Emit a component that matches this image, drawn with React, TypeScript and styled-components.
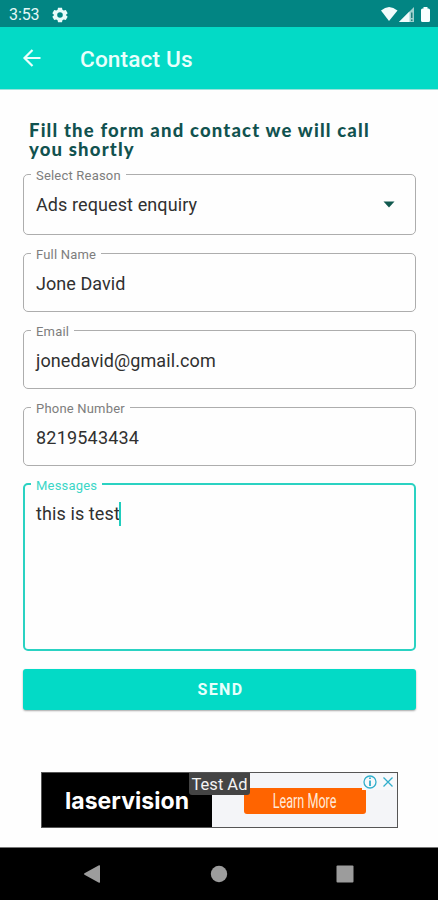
import React from "react";
import styled, { createGlobalStyle } from "styled-components";

const GlobalStyle = createGlobalStyle`
  * { box-sizing: border-box; }
  body { margin: 0; background: #fff; }
`;

const Screen = styled.div`
  width: 438px;
  height: 900px;
  display: flex;
  flex-direction: column;
  overflow: hidden;
  background: #fefefe;
  font-family: Roboto, sans-serif;
  color: #303030;
`;

const StatusBar = styled.div`
  height: 27px;
  flex: none;
  display: flex;
  align-items: center;
  padding: 2px 7px 0 9px;
  background: #028583;
  color: #e4f7f6;
  font-size: 16px;
  letter-spacing: -0.1px;
`;

const StatusIcons = styled.svg`
  margin-left: auto;
`;

const GearIcon = styled.svg`
  margin-left: 13px;
`;

const AppBar = styled.header`
  height: 63px;
  flex: none;
  display: flex;
  align-items: center;
  padding: 2px 22px 0;
  background: #03dac6;
  border-bottom: 1px solid #9be3dc;
  color: #e9fffc;
`;

const Title = styled.h1`
  margin: 1px 0 0 38px;
  font-size: 22.6px;
  font-weight: 500;
  line-height: 28px;
  letter-spacing: 0.15px;
`;

const Content = styled.main`
  flex: 1;
  display: flex;
  flex-direction: column;
  padding: 31px 22px 0 23px;
`;

const Heading = styled.h2`
  margin: 0 0 8px 6px;
  font-family: Lato, sans-serif;
  font-size: 18.5px;
  font-weight: 900;
  line-height: 19px;
  letter-spacing: 1.17px;
  color: #11524f;
`;

const Field = styled.fieldset<{ $height: number; $gap?: number; $active?: boolean }>`
  height: ${(p) => p.$height}px;
  min-width: 0;
  margin: 0 0 ${(p) => p.$gap ?? 11}px;
  padding: 0 20px 0 ${(p) => (p.$active ? 6 : 7)}px;
  border: ${(p) => (p.$active ? "2px solid #2ad2c2" : "1.5px solid #adadad")};
  border-radius: 5px;
  display: flex;
  justify-content: space-between;
`;

const Label = styled.legend<{ $active?: boolean }>`
  height: 14px;
  padding: 0 5px;
  font-size: 13px;
  line-height: ${(p) => (p.$active ? 18 : 17)}px;
  letter-spacing: 0.2px;
  color: ${(p) => (p.$active ? "#3bd6c7" : "#7d7d7d")};
`;

const Value = styled.div<{ $top: number; $spacing?: number }>`
  height: 24px;
  margin-top: ${(p) => p.$top}px;
  padding-left: 5px;
  display: flex;
  align-items: center;
  font-size: 18px;
  line-height: 24px;
  letter-spacing: ${(p) => p.$spacing ?? 0.1}px;
  white-space: pre;
`;

const Caret = styled.span`
  width: 2px;
  height: 24px;
  margin-left: -1px;
  background: #20cdbd;
`;

const DropIcon = styled.svg`
  margin-top: 20px;
`;

const SendButton = styled.button`
  height: 41px;
  flex: none;
  margin-top: 7px;
  padding: 0 0 0 2px;
  border: 0;
  border-radius: 3px;
  background: #03dac6;
  box-shadow: 0 1px 2px rgba(0, 0, 0, 0.35);
  color: #e8fffc;
  font: 700 16px/42px Roboto, sans-serif;
  letter-spacing: 1.4px;
`;

const Ad = styled.aside`
  position: relative;
  width: 357px;
  height: 56px;
  flex: none;
  display: flex;
  margin: 62px 0 0 18px;
  border: 1px solid #555;
  background: #f4f5f8;
`;

const Brand = styled.div`
  width: 170px;
  padding: 1px 0 0 23px;
  background: #000;
  color: #fff;
  font: 700 23px/54px Inter, sans-serif;
  letter-spacing: 0.05px;
`;

const AdBody = styled.div`
  flex: 1;
  padding: 15px 0 0 32px;
`;

const LearnMore = styled.div`
  width: 122px;
  height: 26px;
  display: flex;
  justify-content: center;
  border-radius: 3px;
  background: #ff6400;
  color: #ffe9d8;
  font-size: 20px;
  line-height: 27px;

  span {
    flex: none;
    transform: scaleX(0.63);
  }
`;

const TestBadge = styled.div`
  position: absolute;
  left: 147px;
  top: 0;
  width: 61px;
  height: 22px;
  border-radius: 0 0 3px 3px;
  background: #444;
  color: #f4f4f4;
  font-size: 16.5px;
  line-height: 23px;
  text-align: center;
  white-space: nowrap;
`;

const AdChoices = styled.svg`
  position: absolute;
  right: 0;
  top: 1px;
`;

const NavBar = styled.nav`
  height: 53px;
  flex: none;
  display: flex;
  align-items: center;
  justify-content: space-between;
  padding: 0 84px 1px 83px;
  border-top: 1px solid #777;
  background: #000;
`;

const fields = [
  { label: "Full Name", value: "Jone David", spacing: 0.05, gap: 11 },
  { label: "Email", value: "jonedavid@gmail.com", spacing: 0.1, gap: 11 },
  { label: "Phone Number", value: "8219543434", spacing: 0.2, gap: 11 },
];

export default function App() {
  return (
    <Screen>
      <GlobalStyle />
      <StatusBar>
        <span>3:53</span>
        <GearIcon width="16" height="16" viewBox="0 0 24 24" fill="#e9fbfa">
          <path fillRule="evenodd" d="M9 1h6l.6 3.2 2 1.2 3.1-1 2.8 4.9-2.4 2.2v1l2.4 2.2-2.8 4.9-3.1-1-2 1.2L15 23H9l-.6-3.2-2-1.2-3.1 1-2.8-4.9 2.4-2.2v-1L.5 9.3l2.8-4.9 3.1 1 2-1.2zM12 7.8a4.2 4.2 0 1 0 0 8.4 4.2 4.2 0 0 0 0-8.400z" />
        </GearIcon>
        <StatusIcons width="51" height="17" viewBox="0 0 51 17">
          <path d="M1 4.500Q9-2.500 17.500 4.500L9 15z" fill="#f2fbfb" />
          <path d="M34 1v15H19z" fill="#9fd0ce" />
          <path d="M29.500 5.500V16H19z" fill="#f2fbfb" />
          <path d="M31 6.500h1.500v5.500H31zm0 7h1.500V15H31z" fill="#24807d" />
          <path d="M43.500 1h4v1.500h1q1.500 0 1.500 1.500v10.500q0 1.500-1.500 1.500h-6q-1.500 0-1.500-1.500V4q0-1.500 1.500-1.500h1z" fill="#f8ffff" />
        </StatusIcons>
      </StatusBar>
      <AppBar>
        <svg width="20" height="20" viewBox="0 0 20 20" fill="none" stroke="#e9fffc" strokeWidth="2.2">
          <path d="M18.500 9H2.500M10.500 1 2.500 9l8 8" />
        </svg>
        <Title>Contact Us</Title>
      </AppBar>
      <Content>
        <Heading>
          Fill the form and contact we will call
          <br />
          you shortly
        </Heading>
        <Field $height={68}>
          <Label>Select Reason</Label>
          <Value $top={12}>Ads request enquiry</Value>
          <DropIcon width="12" height="7" viewBox="0 0 12 7">
            <path d="M.5.5h11L6 6.500z" fill="#11594f" />
          </DropIcon>
        </Field>
        {fields.map((f) => (
          <Field key={f.label} $height={66} $gap={f.gap}>
            <Label>{f.label}</Label>
            <Value $top={12} $spacing={f.spacing}>
              {f.value}
            </Value>
          </Field>
        ))}
        <Field $height={174} $active>
          <Label $active>Messages</Label>
          <Value $top={11}>
            this is test
            <Caret />
          </Value>
        </Field>
        <SendButton>SEND</SendButton>
        <Ad>
          <Brand>laservision</Brand>
          <AdBody>
            <LearnMore>
              <span>Learn More</span>
            </LearnMore>
          </AdBody>
          <TestBadge>Test Ad</TestBadge>
          <AdChoices width="35" height="16" viewBox="0 0 35 16" fill="none" stroke="#31aecb" strokeWidth="1.3">
            <rect width="35" height="16" fill="#f8f9fb" stroke="none" />
            <circle cx="8" cy="8" r="6" />
            <path d="M8 6.500V12M8 3.500V5" strokeWidth="1.8" />
            <path d="m21.500 3.500 9 9m0-9-9 9" />
          </AdChoices>
        </Ad>
      </Content>
      <NavBar>
        <svg width="18" height="18" viewBox="0 0 18 18" fill="#9c9c9c">
          <path d="M1.500 8.300 16 .3q1-.3 1 .7v16q0 1-1 .7L1.500 9.700q-1.200-.7 0-1.400z" />
        </svg>
        <svg width="18" height="18" viewBox="0 0 18 18" fill="#9c9c9c">
          <circle cx="9" cy="9" r="8.200" />
        </svg>
        <svg width="18" height="18" viewBox="0 0 18 18" fill="#9c9c9c">
          <rect x=".5" y=".5" width="17" height="17" rx="1" />
        </svg>
      </NavBar>
    </Screen>
  );
}
